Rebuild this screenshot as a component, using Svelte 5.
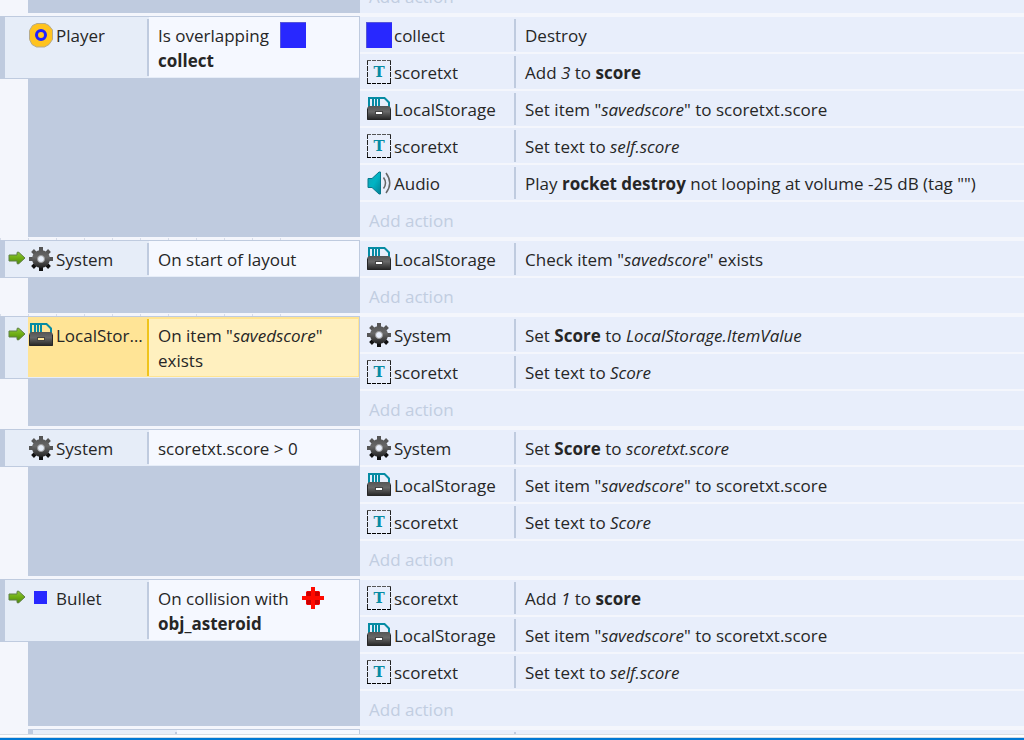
<script lang="ts">
  import { onMount } from "svelte";

  type Part = { t: string; s?: "b" | "i" | "icon" };
  type Row = { icon: string; name: string; text: Part[] };
  type EventBlock = {
    trigger?: boolean;
    selected?: boolean;
    ruler?: boolean;
    sub?: boolean;
    condition?: Row;
    actions: Row[];
  };

  const p = (t: string): Part => ({ t });
  const b = (t: string): Part => ({ t, s: "b" });
  const i = (t: string): Part => ({ t, s: "i" });
  const pic = (t: string): Part => ({ t, s: "icon" });

  const saveScore: Row = {
    icon: "storage",
    name: "LocalStorage",
    text: [p('Set item "'), i("savedscore"), p('" to scoretxt.score')],
  };
  const textRow = (...text: Part[]): Row => ({ icon: "text", name: "scoretxt", text });

  const events: EventBlock[] = [
    { actions: [] },
    {
      condition: { icon: "player", name: "Player", text: [p("Is overlapping "), pic("collect"), b(" collect")] },
      actions: [
        { icon: "collect", name: "collect", text: [p("Destroy")] },
        textRow(p("Add "), i("3"), p(" to "), b("score")),
        saveScore,
        textRow(p("Set text to "), i("self.score")),
        {
          icon: "audio",
          name: "Audio",
          text: [p("Play "), b("rocket destroy"), p(' not looping at volume -25 dB (tag "")')],
        },
      ],
    },
    {
      trigger: true,
      ruler: true,
      condition: { icon: "gear", name: "System", text: [p("On start of layout")] },
      actions: [
        { icon: "storage", name: "LocalStorage", text: [p('Check item "'), i("savedscore"), p('" exists')] },
      ],
    },
    {
      trigger: true,
      ruler: true,
      selected: true,
      condition: { icon: "storage", name: "LocalStorage", text: [p('On item "'), i("savedscore"), p('" exists')] },
      actions: [
        { icon: "gear", name: "System", text: [p("Set "), b("Score"), p(" to "), i("LocalStorage.ItemValue")] },
        textRow(p("Set text to "), i("Score")),
      ],
    },
    {
      condition: { icon: "gear", name: "System", text: [p("scoretxt.score > 0")] },
      actions: [
        { icon: "gear", name: "System", text: [p("Set "), b("Score"), p(" to "), i("scoretxt.score")] },
        saveScore,
        textRow(p("Set text to "), i("Score")),
      ],
    },
    {
      trigger: true,
      condition: {
        icon: "bullet",
        name: "Bullet",
        text: [p("On collision with "), pic("asteroid"), b(" obj_asteroid")],
      },
      actions: [
        textRow(p("Add "), i("1"), p(" to "), b("score")),
        saveScore,
        textRow(p("Set text to "), i("self.score")),
      ],
    },
    {
      sub: true,
      condition: { icon: "", name: "", text: [] },
      actions: [{ icon: "", name: "", text: [] }],
    },
  ];

  const teeth = [0, 45, 90, 135, 180, 225, 270, 315];

  let sheet: HTMLElement;

  onMount(() => {
    sheet.scrollTop = 26;
  });
</script>

{#snippet icon(name: string)}
  <svg class="icon" viewBox="0 0 26 26" aria-hidden="true">
    {#if name === "collect"}
      <rect width="26" height="26" fill="#5656d8" />
      <rect x="1" y="1" width="25" height="25" fill="#2828ff" />
    {:else if name === "bullet"}
      <rect x="6" y="6" width="13" height="13" fill="#2828ff" />
    {:else if name === "player"}
      <path
        d="M9 1.5h8l4 2 3.500 4.500v9.500l-3.500 5-4.500 2.500h-8l-4.500-2.500-2.500-5v-9l3-5z"
        fill="#ffc31e"
        stroke="#b5aa8c"
      />
      <circle cx="13" cy="13" r="4.500" fill="#ffc31e" stroke="#2020ff" stroke-width="3" />
    {:else if name === "text"}
      <path d="M1.500 1v24M24.500 1v24" stroke="#222" stroke-dasharray="5 1" />
      <path d="M1 1.500h24" stroke="#555" stroke-dasharray="4 1" />
      <path d="M1 24.500h24" stroke="#000" stroke-dasharray="4 1" />
      <text x="13" y="18" text-anchor="middle" class="glyph">T</text>
    {:else if name === "storage"}
      <path d="M2 1h17v2H2zM2 1h2v10H2zM6 1h2v10H6zM9 1h2v10H9zM12 1h2v10h-2z" fill="#068ba3" />
      <path d="M18.500 2L23 6.500V11" fill="none" stroke="#068ba3" stroke-width="2" />
      <path d="M1 12l2-2h20l2 2v11l-1 1H2l-1-1z" fill="url(#steel)" />
      <path d="M1.500 13v10.500h23V13" fill="none" stroke="#262626" />
      <rect x="9" y="15" width="8" height="4" fill="#444" />
      <rect class="hole" x="10" y="16" width="6" height="2" />
    {:else if name === "gear"}
      {#each teeth as angle}
        <path d="M11 5V1h4v4z" fill={angle > 100 && angle < 260 ? "#111" : "#555"} transform="rotate({angle} 13 13)" />
      {/each}
      <path
        fill-rule="evenodd"
        d="M13 4a9 9 0 1 0 0 18a9 9 0 1 0 0-18zM13 9.500a3.500 3.500 0 1 1 0 7a3.500 3.500 0 1 1 0-7z"
        fill="url(#steel)"
      />
      <circle cx="13" cy="13" r="3.500" fill="none" stroke="#999" />
    {:else if name === "audio"}
      <path d="M2 8.500h4l7-6.500h1.500v22H13l-7-6.500H2z" fill="url(#teal)" stroke="#08788c" />
      <path d="M17.500 7.500q4 5.500 0 11M20 3q7.500 10 0 20" fill="none" stroke="#666" stroke-width="1.500" />
    {:else if name === "asteroid"}
      <path d="M6 7l1-1h12l1 1v12l-1 1H7l-1-1z" fill="#f00000" />
      <path d="M7 7h12v12H7z" fill="#c80000" />
      <path d="M11 2h4v9h9v4h-9v9h-4v-9H2v-4h9z" fill="#ff0a00" />
    {/if}
  </svg>
{/snippet}

{#snippet description(parts: Part[])}
  {#each parts as part}{#if part.s === "b"}<strong>{part.t}</strong>{:else if part.s === "i"}<em>{part.t}</em
      >{:else if part.s === "icon"}{@render icon(part.t)}{:else}{part.t}{/if}{/each}
{/snippet}

<svg class="defs" aria-hidden="true">
  <defs>
    <linearGradient id="steel" x1="0" y1="0" x2="0" y2="1">
      <stop offset="0" stop-color="#555" />
      <stop offset="0.4" stop-color="#686868" />
      <stop offset="1" stop-color="#222" />
    </linearGradient>
    <linearGradient id="teal" x1="0" y1="0" x2="1" y2="1">
      <stop offset="0" stop-color="#16a3b5" />
      <stop offset="0.5" stop-color="#00b4c4" />
      <stop offset="1" stop-color="#047f94" />
    </linearGradient>
    <linearGradient id="leaf" x1="0" y1="0" x2="0" y2="1">
      <stop offset="0" stop-color="#8cc63a" />
      <stop offset="0.5" stop-color="#6fae14" />
      <stop offset="1" stop-color="#4f8a0c" />
    </linearGradient>
  </defs>
</svg>

<div class="window">
  <main class="sheet" bind:this={sheet}>
    {#each events as event}
      <section class="event" class:ruler={event.ruler} class:sub={event.sub}>
        <div class="conditions">
          {#if event.condition}
            <div class="condition" class:selected={event.selected}>
              <div class="margin">
                {#if event.trigger}
                  <svg class="arrow" viewBox="0 0 18 14" aria-hidden="true">
                    <path
                      d="M1 4h8V1.500q1-1 2 0L17 7l-6 5.500q-1 1-2 0V10H1z"
                      fill="url(#leaf)"
                      stroke="#5f7f45"
                      stroke-linejoin="round"
                    />
                  </svg>
                {/if}
              </div>
              <div class="object">
                {@render icon(event.condition.icon)}
                <span class="name">{event.condition.name}</span>
              </div>
              <div class="text">{@render description(event.condition.text)}</div>
            </div>
          {/if}
          <div class="rest"></div>
        </div>
        <div class="actions">
          {#each event.actions as action}
            <div class="action">
              <div class="object">
                {@render icon(action.icon)}
                <span class="name">{action.name}</span>
              </div>
              <div class="text">{@render description(action.text)}</div>
            </div>
          {/each}
          {#if !event.sub}
            <button class="add">Add action</button>
          {/if}
        </div>
      </section>
    {/each}
  </main>
  <footer class="edge"></footer>
</div>

<style>
  :global(body) {
    margin: 0;
  }
  .window {
    display: flex;
    flex-direction: column;
    height: 100vh;
    background: #f4f6fc;
    color: #262626;
    font-family: "Open Sans", "Noto Sans", sans-serif;
    font-size: 17px;
    line-height: 25px;
  }
  .defs {
    position: absolute;
    width: 0;
    height: 0;
  }
  .sheet {
    flex: 1;
    min-height: 0;
    overflow: hidden;
  }
  .event {
    display: grid;
    grid-template-columns: 360px 1fr;
    padding-top: 3px;
  }
  .ruler {
    background: repeating-linear-gradient(to right, #d6dce9 0 1px, transparent 1px 28px) 0 1px / 281px 2px no-repeat;
  }
  .conditions {
    display: flex;
    flex-direction: column;
  }
  .condition {
    display: grid;
    grid-template-columns: 28px 119px 1fr;
    border: solid #bfcbdf;
    border-width: 1px 1px 1px 0;
    background: #e6edf8;
    padding-bottom: 1px;
  }
  .margin {
    border-left: 5px solid #bfcbdf;
    margin-bottom: -1px;
    padding: 10px 0 0 3px;
  }
  .arrow {
    display: block;
    width: 18px;
    height: 14px;
  }
  .rest {
    flex: 1;
    margin-left: 28px;
    background: #bfcbdf;
  }
  .object {
    display: flex;
    gap: 2px;
    min-width: 0;
  }
  .icon {
    flex: none;
    width: 26px;
    height: 26px;
    margin-top: 5px;
  }
  .glyph {
    font-family: "DejaVu Serif", serif;
    font-size: 15px;
    font-weight: bold;
    fill: #068ba3;
  }
  .hole {
    fill: #fff;
  }
  .name {
    padding: 6px 0 4px;
    overflow: hidden;
    text-overflow: ellipsis;
    white-space: nowrap;
  }
  .text {
    position: relative;
    padding: 6px 20px 4px 11px;
  }
  .text::before {
    content: "";
    position: absolute;
    top: 2px;
    bottom: 1px;
    left: 0;
    width: 2px;
    background: #bfcbdf;
  }
  .text .icon {
    margin: -8px 7px -4px;
    vertical-align: middle;
  }
  .condition .text {
    background: linear-gradient(#f5f8ff, #f5f8ff) 2px 0 no-repeat;
  }
  .selected .object {
    background: #ffe496;
  }
  .selected .hole {
    fill: #ffe496;
  }
  .condition.selected .text {
    background: #fff0bf;
    box-shadow: inset -1px -1px #ffe492, inset 0 2px #ffe492;
  }
  .selected .text::before {
    background: #f0c41b;
  }
  .actions {
    display: flex;
    flex-direction: column;
    gap: 2px;
    padding-top: 1px;
  }
  .action {
    display: grid;
    grid-template-columns: 148px 1fr;
    padding-left: 6px;
    background: #e8eefb;
  }
  .action .object {
    height: 35px;
  }
  .add {
    border: 0;
    padding: 6px 9px 4px;
    background: #e8eefb;
    color: #c1cde1;
    font: inherit;
    text-align: left;
  }
  .sub {
    grid-template-columns: 332px 1fr;
    padding-left: 28px;
  }
  .edge {
    height: 2px;
    border-top: 1px solid #d9dde3;
    border-bottom: 2px solid #0078d4;
    padding-top: 1px;
    background: linear-gradient(#fff 0 2px, #cfdbe6 2px);
  }
</style>
